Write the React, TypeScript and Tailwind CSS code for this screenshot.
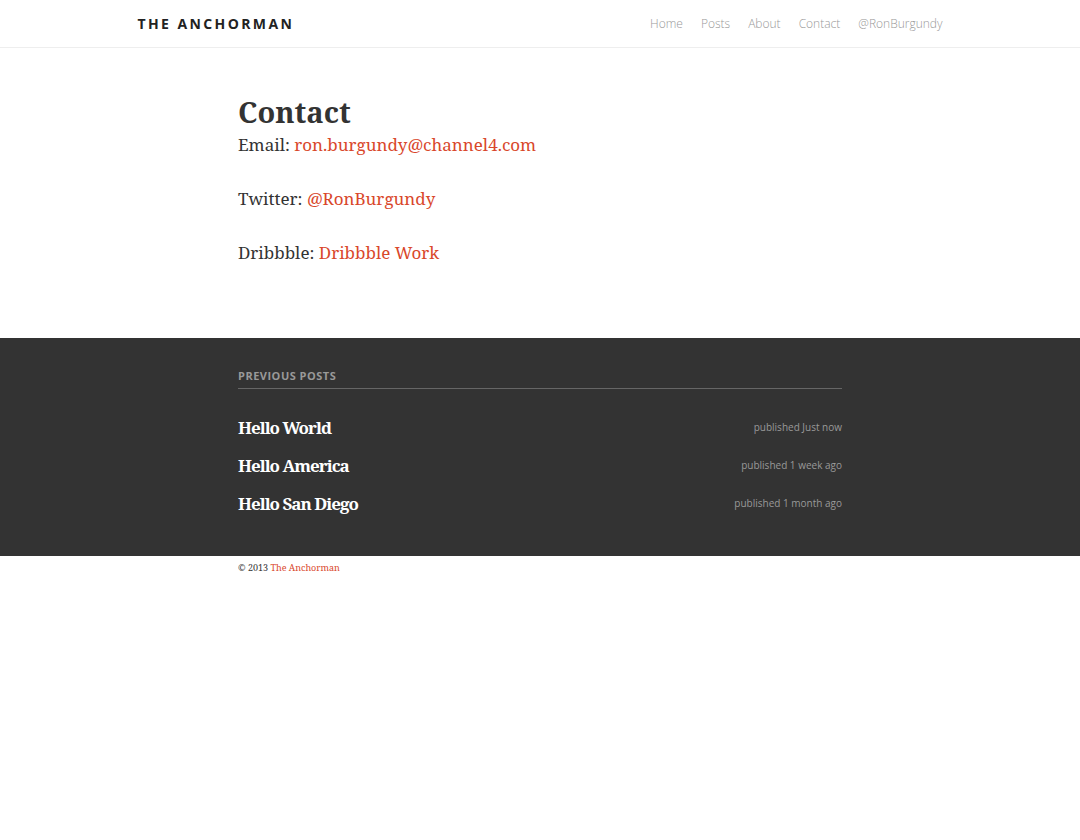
import React from 'react';

const serif = { fontFamily: '"Droid Serif", "Noto Serif", "DejaVu Serif", serif' };
const sans = { fontFamily: '"Open Sans", "Liberation Sans", sans-serif' };

export default function App() {
  const navLinks = ['Home', 'Posts', 'About', 'Contact', '@RonBurgundy'];
  const posts = [
    { title: 'Hello World', when: 'published Just now' },
    { title: 'Hello America', when: 'published 1 week ago' },
    { title: 'Hello San Diego', when: 'published 1 month ago' },
  ];

  return (
    <div className="min-h-screen bg-white text-[#333]" style={serif}>
      {/* header */}
      <header className="h-[48px] border-b border-[#eeeeee]">
        <div className="mx-auto flex h-full w-[805px] items-center justify-between" style={sans}>
          <a className="text-[14px] font-bold tracking-[2.4px] text-[#222]">THE ANCHORMAN</a>
          <nav className="flex gap-[18px] text-[12px] font-light text-[#999]">
            {navLinks.map((l) => (
              <a key={l}>{l}</a>
            ))}
          </nav>
        </div>
      </header>

      {/* page */}
      <main className="mx-auto w-[604px] pt-[44px] pb-[72px]">
        <h1 className="text-[29px] font-bold leading-[40px] text-[#333]">Contact</h1>
        <div className="text-[17px] leading-[26px] text-[#333]">
          <p className="mb-[28px]">
            Email: <a className="text-[#d9472b]">ron.burgundy@channel4.com</a>
          </p>
          <p className="mb-[28px]">
            Twitter: <a className="text-[#d9472b]">@RonBurgundy</a>
          </p>
          <p>
            Dribbble: <a className="text-[#d9472b]">Dribbble Work</a>
          </p>
        </div>
      </main>

      {/* previous posts */}
      <section className="bg-[#333333] pt-[30px] pb-[39px]">
        <div className="mx-auto w-[604px]">
          <h3
            className="border-b border-[#666] pb-[3px] text-[11px] font-bold uppercase tracking-[0.5px] text-[#999]"
            style={sans}
          >
            Previous Posts
          </h3>
          <ul className="mt-[26px] flex flex-col gap-[12px]">
            {posts.map((p) => (
              <li key={p.title} className="flex items-center justify-between">
                <span className="text-[17px] font-bold leading-[26px] tracking-[-1px] text-white">{p.title}</span>
                <span className="text-[10px] text-[#999]" style={sans}>
                  {p.when}
                </span>
              </li>
            ))}
          </ul>
        </div>
      </section>

      {/* footer */}
      <footer className="mx-auto w-[604px] pt-[5px] text-[9px] text-[#333]">
        © 2013 <a className="text-[#d9472b]">The Anchorman</a>
      </footer>
    </div>
  );
}
